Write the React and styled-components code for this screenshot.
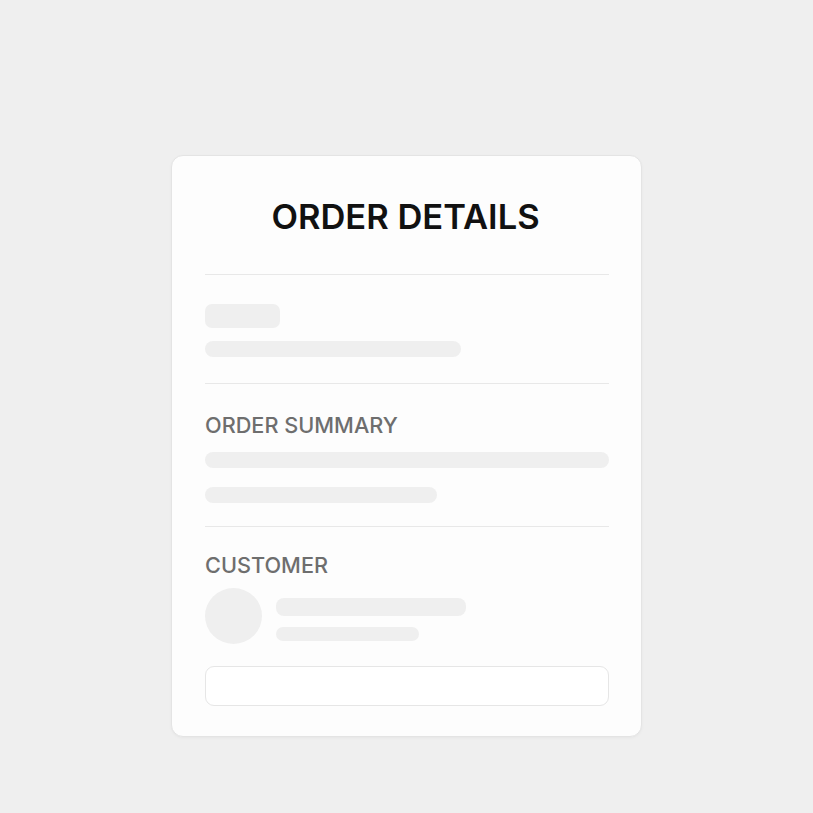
import React from 'react'
import styled, { createGlobalStyle } from 'styled-components'

const GlobalStyle = createGlobalStyle`
  html, body {
    margin: 0;
    padding: 0;
    background: #efefef;
    font-family: Inter, "Noto Sans", sans-serif;
  }
`;

const Page = styled.div`
  width: 813px;
  height: 813px;
  display: flex;
  justify-content: center;
  padding-top: 155px;
  box-sizing: border-box;
`;

const Card = styled.div`
  width: 471px;
  height: 582px;
  box-sizing: border-box;
  background: #fdfdfd;
  border: 1px solid #e4e4e4;
  border-radius: 12px;
  box-shadow: 0 1px 3px rgba(0, 0, 0, 0.04);
  padding: 0 32px 0 33px;
  display: flex;
  flex-direction: column;
`;

const Title = styled.h1`
  margin: 0;
  padding-right: 3px;
  height: 118px;
  line-height: 121px;
  text-align: center;
  font-size: 34.5px;
  font-weight: 600;
  color: #111;
  border-bottom: 1px solid #e8e8e8;
`;

const Section = styled.div`
  display: flex;
  flex-direction: column;
  padding: ${p => p.$pad || '29px 0 26px'};
  border-bottom: ${p => (p.$last ? 'none' : '1px solid #e8e8e8')};
`;

const Label = styled.div`
  font-size: 21.7px;
  font-weight: 500;
  color: #6e6e6e;
  line-height: 24px;
  margin-bottom: ${p => p.$mb || '14px'};
`;

const Bar = styled.div`
  width: ${p => p.$w};
  height: ${p => p.$h}px;
  border-radius: ${p => p.$r || 8}px;
  background: #efefef;
  margin-top: ${p => p.$mt || 0}px;
`;

const Row = styled.div`
  display: flex;
  align-items: flex-start;
  gap: 14px;
`;

const Avatar = styled.div`
  width: 57px;
  height: 56px;
  border-radius: 50%;
  background: #efefef;
  flex-shrink: 0;
`;

const Lines = styled.div`
  display: flex;
  flex-direction: column;
  padding-top: 10px;
`;

const InputBox = styled.div`
  height: 40px;
  margin-top: 22px;
  box-sizing: border-box;
  border: 1.5px solid #e6e6e6;
  border-radius: 9px;
  background: #fff;
`;

export default function App() {
  return (
    <>
      <GlobalStyle />
      <Page>
        <Card>
          <Title>ORDER DETAILS</Title>
          <Section $pad="29px 0 26px">
            <Bar $w="75px" $h={24} $r={7} />
            <Bar $w="256px" $h={16} $mt={13} />
          </Section>
          <Section $pad="29px 0 23px">
            <Label $mb="15px">ORDER SUMMARY</Label>
            <Bar $w="100%" $h={16} />
            <Bar $w="232px" $h={16} $mt={19} />
          </Section>
          <Section $last $pad="26px 0 0">
            <Label $mb="11px">CUSTOMER</Label>
            <Row>
              <Avatar />
              <Lines>
                <Bar $w="190px" $h={18} />
                <Bar $w="143px" $h={14} $mt={11} $r={7} />
              </Lines>
            </Row>
            <InputBox />
          </Section>
        </Card>
      </Page>
    </>
  )
}
